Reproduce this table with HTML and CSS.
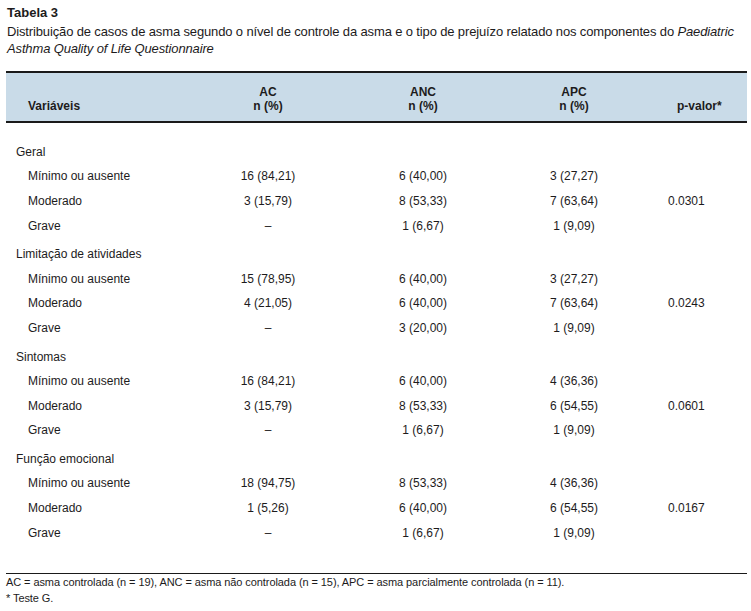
FILE: index.html
```html
<!DOCTYPE html>
<html lang="pt">
<head>
<meta charset="utf-8">
<title>Tabela 3</title>
<link rel="stylesheet" href="styles.css">
</head>
<body>
<figure class="figure">
  <figcaption class="caption">
    <div class="caption-title">Tabela 3</div>
    <div class="caption-text">Distribuição de casos de asma segundo o nível de controle da asma e o tipo de prejuízo relatado nos componentes do <em>Paediatric</em> <em>Asthma Quality of Life Questionnaire</em></div>
  </figcaption>
  <table class="data">
    <colgroup>
      <col class="c-label"><col class="c-ac"><col class="c-anc"><col class="c-apc"><col class="c-p">
    </colgroup>
    <thead>
      <tr>
        <th class="h-label">Variáveis</th>
        <th class="h-num">AC<br>n (%)</th>
        <th class="h-num">ANC<br>n (%)</th>
        <th class="h-num">APC<br>n (%)</th>
        <th class="h-p">p-valor*</th>
      </tr>
    </thead>
    <tbody>
      <tr class="group first"><td class="g-label">Geral</td><td></td><td></td><td></td><td></td></tr>
      <tr class="sub"><td class="s-label">Mínimo ou ausente</td><td class="num">16 (84,21)</td><td class="num">6 (40,00)</td><td class="num">3 (27,27)</td><td class="pv"></td></tr>
      <tr class="sub"><td class="s-label">Moderado</td><td class="num">3 (15,79)</td><td class="num">8 (53,33)</td><td class="num">7 (63,64)</td><td class="pv">0.0301</td></tr>
      <tr class="sub"><td class="s-label">Grave</td><td class="num">–</td><td class="num">1 (6,67)</td><td class="num">1 (9,09)</td><td class="pv"></td></tr>

      <tr class="group"><td class="g-label">Limitação de atividades</td><td></td><td></td><td></td><td></td></tr>
      <tr class="sub"><td class="s-label">Mínimo ou ausente</td><td class="num">15 (78,95)</td><td class="num">6 (40,00)</td><td class="num">3 (27,27)</td><td class="pv"></td></tr>
      <tr class="sub"><td class="s-label">Moderado</td><td class="num">4 (21,05)</td><td class="num">6 (40,00)</td><td class="num">7 (63,64)</td><td class="pv">0.0243</td></tr>
      <tr class="sub"><td class="s-label">Grave</td><td class="num">–</td><td class="num">3 (20,00)</td><td class="num">1 (9,09)</td><td class="pv"></td></tr>

      <tr class="group"><td class="g-label">Sintomas</td><td></td><td></td><td></td><td></td></tr>
      <tr class="sub"><td class="s-label">Mínimo ou ausente</td><td class="num">16 (84,21)</td><td class="num">6 (40,00)</td><td class="num">4 (36,36)</td><td class="pv"></td></tr>
      <tr class="sub"><td class="s-label">Moderado</td><td class="num">3 (15,79)</td><td class="num">8 (53,33)</td><td class="num">6 (54,55)</td><td class="pv">0.0601</td></tr>
      <tr class="sub"><td class="s-label">Grave</td><td class="num">–</td><td class="num">1 (6,67)</td><td class="num">1 (9,09)</td><td class="pv"></td></tr>

      <tr class="group"><td class="g-label">Função emocional</td><td></td><td></td><td></td><td></td></tr>
      <tr class="sub"><td class="s-label">Mínimo ou ausente</td><td class="num">18 (94,75)</td><td class="num">8 (53,33)</td><td class="num">4 (36,36)</td><td class="pv"></td></tr>
      <tr class="sub"><td class="s-label">Moderado</td><td class="num">1 (5,26)</td><td class="num">6 (40,00)</td><td class="num">6 (54,55)</td><td class="pv">0.0167</td></tr>
      <tr class="sub"><td class="s-label">Grave</td><td class="num">–</td><td class="num">1 (6,67)</td><td class="num">1 (9,09)</td><td class="pv"></td></tr>
    </tbody>
  </table>
  <div class="notes">
    <p class="note">AC = asma controlada (n = 19), ANC = asma não controlada (n = 15), APC = asma parcialmente controlada (n = 11).</p>
    <p class="note">* Teste G.</p>
  </div>
</figure>
</body>
</html>
```

FILE: styles.css
```css
html, body {
  margin: 0;
  padding: 0;
  background: #ffffff;
}

body {
  font-family: "Liberation Sans", Arial, Helvetica, sans-serif;
  color: #1d1b1c;
}

.figure {
  margin: 0;
  padding: 4px 2px 0 6px;
}

.caption-title {
  font-size: 13px;
  font-weight: bold;
  line-height: 17px;
  padding-left: 1px;
}

.caption-text {
  margin-top: 2px;
  font-size: 13px;
  line-height: 17px;
  padding-left: 1px;
  letter-spacing: -0.14px;
}

.caption-text em {
  font-style: italic;
}

.data {
  margin-top: 14px;
  width: 741px;
  table-layout: fixed;
  border-collapse: separate;
  border-spacing: 0;
  font-size: 12px;
}

.c-label { width: 184px; }
.c-ac { width: 156px; }
.c-anc { width: 154px; }
.c-apc { width: 148px; }
.c-p { width: 99px; }

.data thead th {
  background: #c9dbe8;
  border-top: 2px solid #1a1a1a;
  border-bottom: 2px solid #1a1a1a;
  font-weight: bold;
  font-size: 12px;
  line-height: 14px;
  padding: 12px 0 8px;
  vertical-align: bottom;
}

.h-label {
  text-align: left;
  padding-left: 22px !important;
}

.h-num {
  text-align: center;
}

.h-p {
  text-align: left;
  padding-left: 29px !important;
}

.data td {
  padding: 0;
  line-height: 14.6px;
  white-space: nowrap;
}

.group td {
  padding-top: 9px;
  padding-bottom: 5px;
}

.group.first td {
  padding-top: 21.75px;
}

.sub td {
  padding-top: 5px;
  padding-bottom: 5px;
}

.g-label {
  padding-left: 10px !important;
}

.s-label {
  padding-left: 22px !important;
}

.num {
  text-align: center;
}

.pv {
  text-align: left;
  padding-left: 20px !important;
}

.notes {
  margin-top: 28px;
  border-top: 1.5px solid #1a1a1a;
  width: 741px;
}

.note {
  margin: 0;
  font-size: 11px;
  line-height: 16px;
  letter-spacing: -0.08px;
}
```
